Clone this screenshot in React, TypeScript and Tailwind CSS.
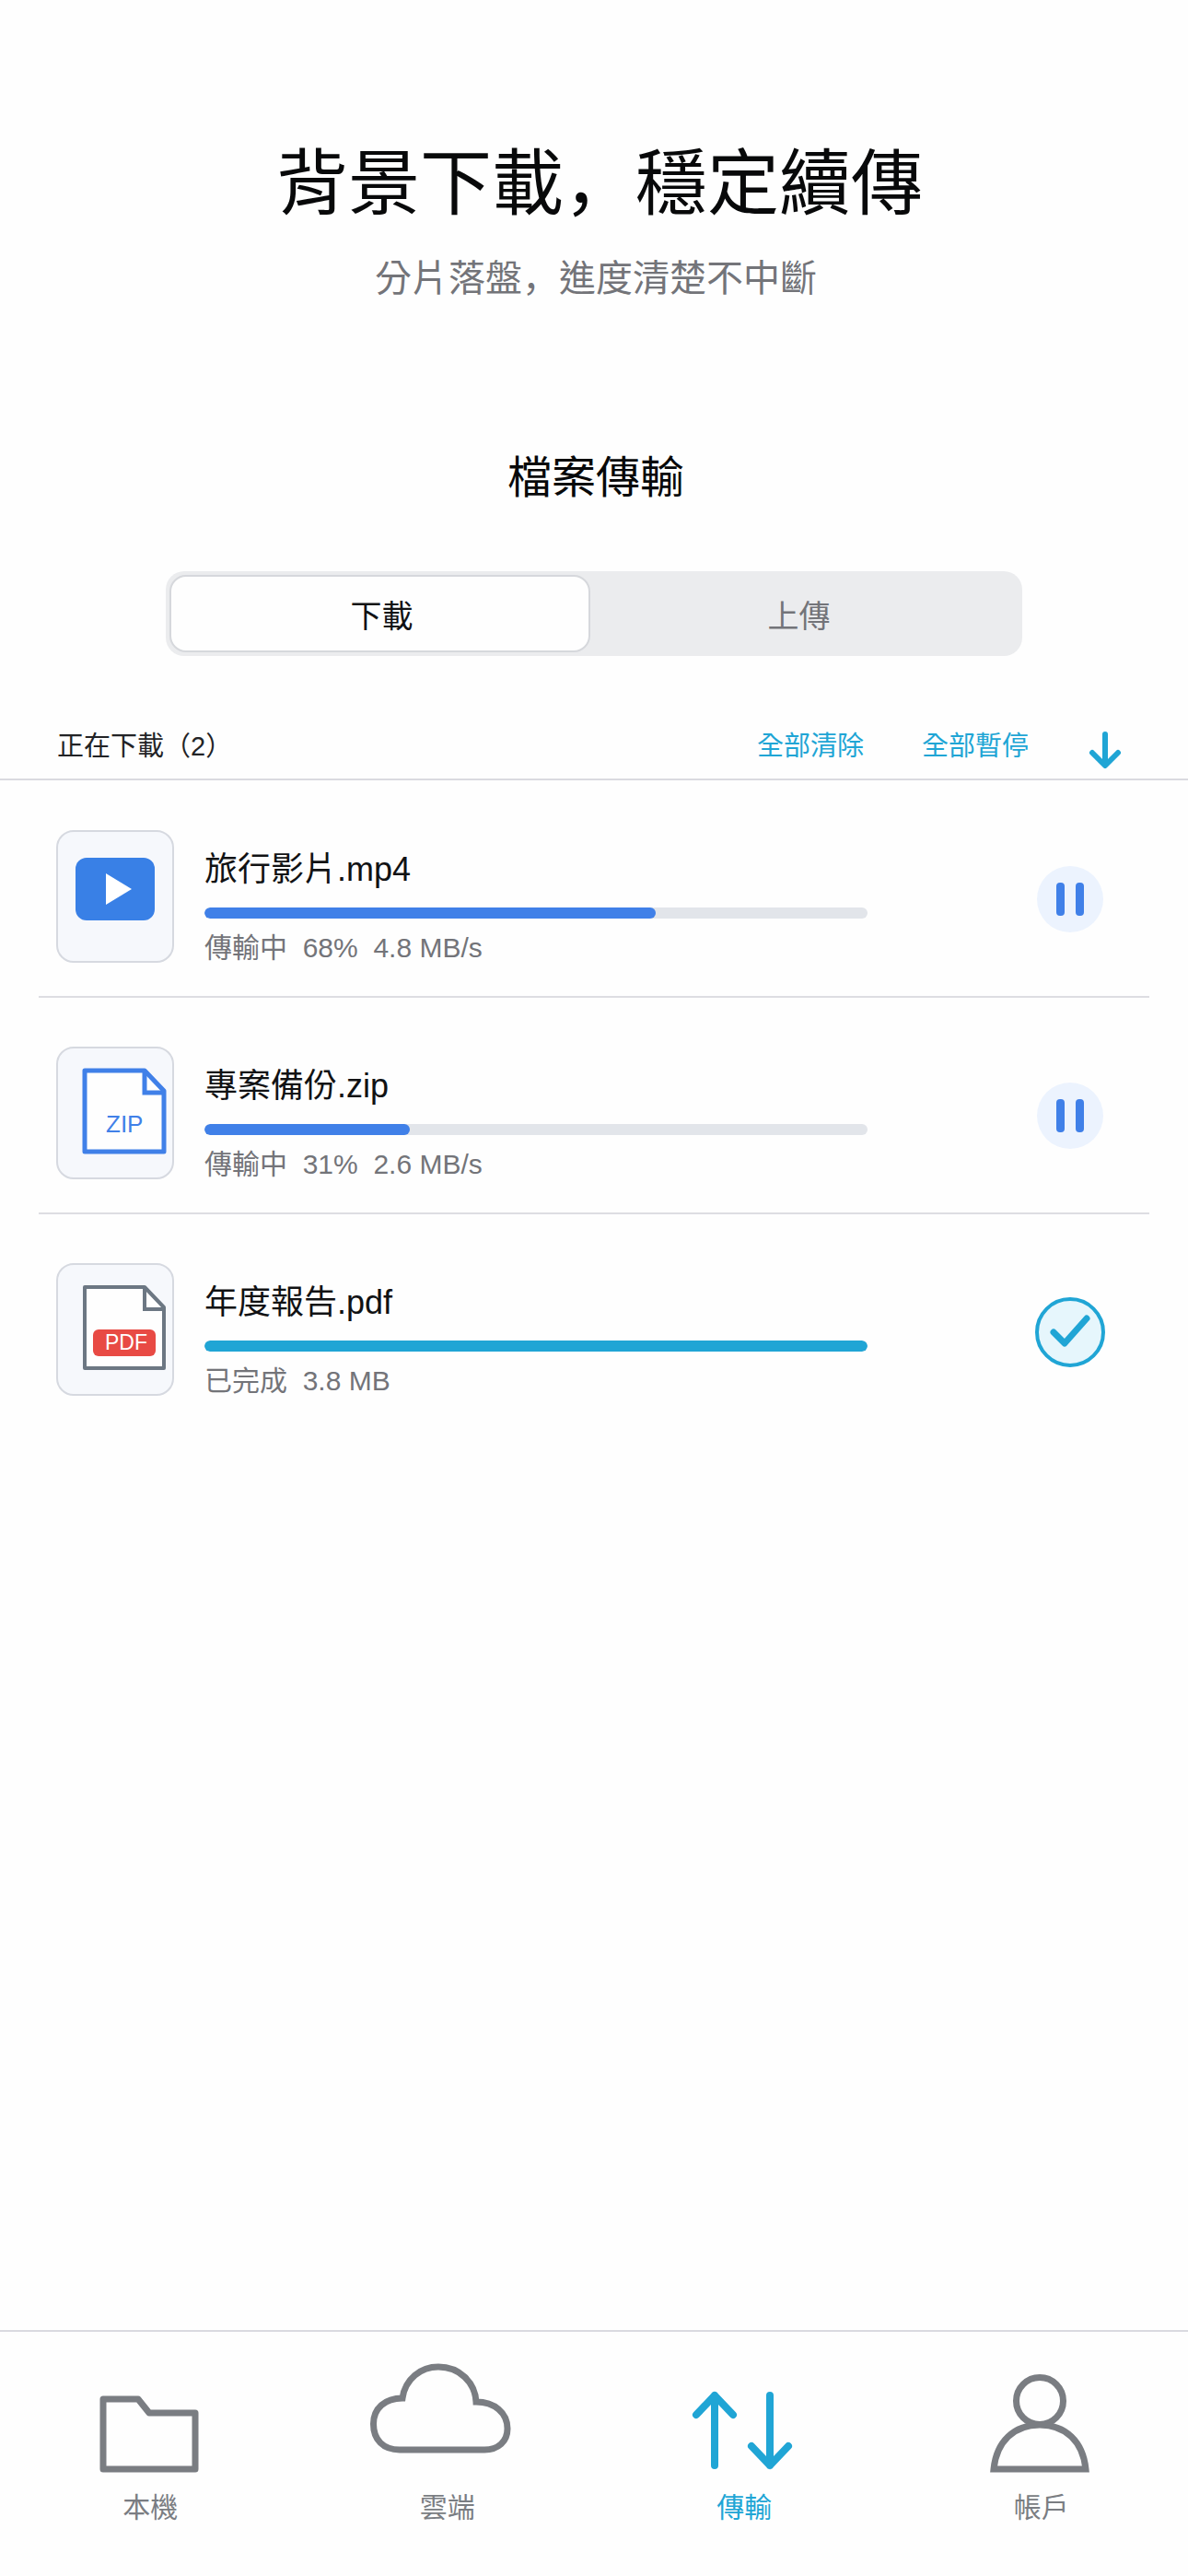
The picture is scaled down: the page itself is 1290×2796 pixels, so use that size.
import { useState } from 'react';
import type { ReactNode } from 'react';

type Kind = 'video' | 'zip' | 'pdf';

interface Transfer {
  name: string;
  kind: Kind;
  percent: number;
  meta: string;
  done?: boolean;
}

const transfers: Transfer[] = [
  { name: '旅行影片.mp4', kind: 'video', percent: 68, meta: '傳輸中  68%  4.8 MB/s' },
  { name: '專案備份.zip', kind: 'zip', percent: 31, meta: '傳輸中  31%  2.6 MB/s' },
  { name: '年度報告.pdf', kind: 'pdf', percent: 100, meta: '已完成  3.8 MB', done: true },
];

// The TC face centres its comma; the SC face keeps it at the lower left.
function Comma() {
  return <span lang="zh-Hans" className="font-['Noto_Sans_CJK_SC'] leading-[0]">，</span>;
}

function FileIcon({ kind }: { kind: Kind }) {
  if (kind === 'video') {
    return (
      <svg viewBox="0 0 124 140" className="size-full" aria-hidden="true">
        <rect x="19" y="28" width="86" height="68" rx="12" fill="#3980e6" />
        <path d="M52 45 L80 62 L52 79 Z" fill="#fff" />
      </svg>
    );
  }
  const isZip = kind === 'zip';
  return (
    <svg viewBox="0 0 124 140" className="size-full" aria-hidden="true">
      <g stroke={isZip ? '#4080e8' : '#6c7783'} strokeWidth={isZip ? 5 : 4} strokeLinejoin="round">
        <path d="M29 24 H94 L115 46 V112 H29 Z" fill="#fefefe" />
        <path d="M94 24 V48 H115" fill="none" strokeLinejoin="miter" />
      </g>
      {isZip ? (
        <text x="52" y="91" fontSize="26" fill="#4080e8">ZIP</text>
      ) : (
        <>
          <rect x="38" y="70" width="68" height="29" rx="6" fill="#e84a44" />
          <text x="51" y="92" fontSize="23" fill="#fff">PDF</text>
        </>
      )}
    </svg>
  );
}

function TransferRow({ item }: { item: Transfer }) {
  return (
    <li className="flex items-start border-b-2 border-[#dddde2] pt-[53px] pr-12 pb-[34px] pl-[19px] last:border-b-0">
      <div className="h-36 w-32 shrink-0 rounded-[19px] border-2 border-[#d6d9e0] bg-[#f6f8fc]">
        <FileIcon kind={item.kind} />
      </div>
      <div className="mr-[182px] ml-[33px] min-w-0 flex-1 pt-[21px]">
        <h3 className="text-4xl/[44px] text-[#111214]">{item.name}</h3>
        <div
          role="progressbar"
          aria-label={item.name}
          aria-valuenow={item.percent}
          className="mt-[19px] h-3 overflow-hidden rounded-full bg-[#e2e5ea]"
        >
          <div
            className={`h-full rounded-full ${item.done ? 'bg-[#20a5d5]' : 'bg-[#4080e8]'}`}
            style={{ width: `${item.percent}%` }}
          />
        </div>
        <p className="mt-3.5 text-3xl/9 whitespace-pre text-[#737479]">{item.meta}</p>
      </div>
      <div className="mt-[37px] flex size-[76px] shrink-0 items-center justify-center">
        {item.done ? (
          <svg viewBox="0 0 76 76" className="size-full" role="img" aria-label="已完成">
            <circle cx="38" cy="38" r="36" fill="#e6f6fc" stroke="#20a5d5" strokeWidth="4" />
            <path d="M20 38 L32 50 L56 23" fill="none" stroke="#20a5d5" strokeWidth="7" strokeLinecap="round" strokeLinejoin="round" />
          </svg>
        ) : (
          <button type="button" aria-label="暫停" className="size-[72px] rounded-full bg-[#ecf3fe]">
            <svg viewBox="0 0 72 72" className="size-full" fill="#4080e8">
              <rect x="21" y="18" width="9" height="36" rx="4" />
              <rect x="42" y="18" width="9" height="36" rx="4" />
            </svg>
          </button>
        )}
      </div>
    </li>
  );
}

function NavItem({ label, active, children }: { label: string; active?: boolean; children: ReactNode }) {
  return (
    <a
      href="#"
      aria-current={active ? 'page' : undefined}
      className={`flex flex-col items-center gap-4 pl-1 ${active ? 'text-[#20a5d5]' : 'text-[#7a7d82]'}`}
    >
      <svg
        viewBox="0 0 180 128"
        className="h-32 w-[180px]"
        fill="none"
        stroke="currentColor"
        strokeWidth={active ? 8 : 7}
        strokeLinecap="round"
        aria-hidden="true"
      >
        {children}
      </svg>
      <span className="text-3xl/9">{label}</span>
    </a>
  );
}

export default function App() {
  const [tab, setTab] = useState<'download' | 'upload'>('download');

  const tabClass = (selected: boolean) =>
    selected
      ? 'rounded-[18px] border-2 border-[#d6d8dc] bg-[#fefefe] text-[#111214]'
      : 'text-[#737479]';

  return (
    <div className="flex min-h-screen flex-col bg-[#fefefe] font-['Liberation_Sans','Noto_Sans_CJK_TC',sans-serif]" lang="zh-Hant">
      <header className="pt-40 text-center">
        <h1 className="pl-3 text-[78px]/[80px] text-[#08090a]">
          背景下載<Comma />穩定續傳
        </h1>
        <p className="mt-[38px] pl-1 text-[40px]/[48px] text-[#737479]">
          分片落盤<Comma />進度清楚不中斷
        </p>
      </header>

      <main>
        <h2 className="mt-[165px] pl-1 text-center text-5xl/[56px] text-[#08090a]">檔案傳輸</h2>

        <div role="tablist" className="mx-[180px] mt-[73px] grid h-[92px] grid-cols-2 gap-2 rounded-[20px] bg-[#ebecee] p-1 text-[34px]/[40px]">
          <button
            type="button"
            role="tab"
            aria-selected={tab === 'download'}
            onClick={() => setTab('download')}
            className={`pt-1.5 pl-1 ${tabClass(tab === 'download')}`}
          >
            下載
          </button>
          <button
            type="button"
            role="tab"
            aria-selected={tab === 'upload'}
            onClick={() => setTab('upload')}
            className={`pt-1.5 pr-5 ${tabClass(tab === 'upload')}`}
          >
            上傳
          </button>
        </div>

        <div className="mt-[71px] flex h-16 items-center border-b-2 border-[#dadae0] pr-[70px] pl-[62px] text-[29px]/[40px]">
          <h2 className="mr-auto pb-2 text-[#222326]">正在下載（2）</h2>
          <div className="flex items-center gap-[63px] text-[#20a5d5]">
            <button type="button" className="pb-2">全部清除</button>
            <button type="button" className="pb-2">全部暫停</button>
            <button type="button" aria-label="全部下載">
              <svg viewBox="0 0 40 40" className="size-10" fill="none" stroke="currentColor" strokeWidth="6" strokeLinecap="round" strokeLinejoin="round">
                <path d="M20 3 V36 M6 23 L20 37 L34 23" />
              </svg>
            </button>
          </div>
        </div>

        <ul className="mx-[42px] pt-px">
          {transfers.map((item) => (
            <TransferRow key={item.name} item={item} />
          ))}
        </ul>
      </main>

      <nav className="mt-auto grid grid-cols-4 border-t-2 border-[#dadae0] pt-[29px] pb-14">
        <NavItem label="本機">
          <path d="M39 44 H77 L89 59 H139 V120 H39 Z" strokeLinejoin="round" />
        </NavItem>
        <NavItem label="雲端">
          <path d="M38 99 C20 99 9.500 88 9.500 71 C9.500 54 22 43 41 43 C44 22 61 9 80 9 C103 9 120 26 121 47 C141 47 155 59 155 76 C155 90 145 99 130 99 Z" />
        </NavItem>
        <NavItem label="傳輸" active>
          <path d="M58 116 V40 M38 61 L58 40 L78 61 M118 40 V116 M98 95 L118 116 L138 95" strokeLinejoin="round" />
        </NavItem>
        <NavItem label="帳戶">
          <circle cx="88" cy="46" r="25.500" />
          <path d="M38 120 C41 90 60 72 88 72 C116 72 135 90 138 120 Z" />
        </NavItem>
      </nav>
    </div>
  );
}
